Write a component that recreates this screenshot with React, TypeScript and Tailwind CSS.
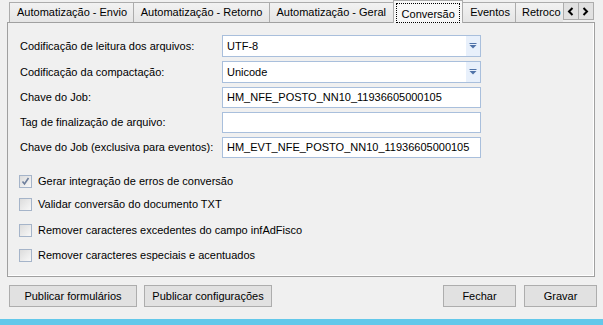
const font = { fontFamily: '"Liberation Sans", Arial, sans-serif' };

function Tab({ label, w }: { label: string; w: number }) {
  return (
    <div
      className="h-[20px] -ml-px border border-b-0 border-[#acacac] bg-gradient-to-b from-[#f2f2f2] to-[#e5e5e5] flex items-center pl-[7px] overflow-hidden whitespace-nowrap"
      style={{ width: w }}
    >
      {label}
    </div>
  );
}

function Combo({ value }: { value: string }) {
  return (
    <div className="w-[259px] h-[22px] border border-[#a9bfdc] bg-white flex">
      <div className="flex-1 flex items-center pl-[4px]">{value}</div>
      <div className="w-[14px] bg-[#e8f0fb] flex items-center justify-center">
        <svg width="8" height="6" viewBox="0 0 8 6">
          <rect x="0.5" y="0" width="7" height="1" fill="#4f72a8" />
          <path d="M0.5 2 L7.5 2 L4 5.5 Z" fill="#4f72a8" />
        </svg>
      </div>
    </div>
  );
}

function TextBox({ value }: { value: string }) {
  return (
    <div className="w-[259px] h-[21px] border border-[#a9bfdc] bg-white flex items-center pl-[4px]">
      {value}
    </div>
  );
}

function Row({ label, children }: { label: string; children: React.ReactNode }) {
  return (
    <div className="flex items-center">
      <div className="w-[202px]">{label}</div>
      {children}
    </div>
  );
}

function Check({ label, checked }: { label: string; checked?: boolean }) {
  return (
    <div className="flex items-center h-[13px]">
      <div className="w-[13px] h-[13px] border border-[#a5b4c9] bg-gradient-to-br from-[#dcdcdc] to-[#f8f8f8] flex items-center justify-center">
        {checked && (
          <svg width="9" height="9" viewBox="0 0 9 9">
            <path d="M1.5 4.5 L3.5 7 L7.5 1" stroke="#6e7f9c" strokeWidth="1.6" fill="none" />
          </svg>
        )}
      </div>
      <span className="ml-[6px]">{label}</span>
    </div>
  );
}

function Button({ label, w }: { label: string; w: number }) {
  return (
    <div
      className="h-[22px] border border-[#adadad] bg-[#e1e1e1] flex items-center justify-center"
      style={{ width: w }}
    >
      {label}
    </div>
  );
}

export default function App() {
  return (
    <div className="w-[603px] h-[325px] bg-[#f0f0f0] text-[11px] text-black flex flex-col overflow-hidden" style={font}>
      {/* tab strip */}
      <div className="h-[22px] flex items-end pl-[10px] pr-[9px] relative z-10">
        <Tab label="Automatização - Envio" w={125} />
        <Tab label="Automatização - Retorno" w={137} />
        <Tab label="Automatização - Geral" w={126} />
        <div className="w-[70px] h-[23px] -mb-px -ml-px border border-b-0 border-[#acacac] bg-[#f7f7f7] p-[2px] pb-0">
          <div className="h-full border border-dotted border-black flex items-start justify-center pt-[2px]">
            Conversão
          </div>
        </div>
        <Tab label="Eventos" w={54} />
        <div className="h-[20px] -ml-px w-[48px] border border-b-0 border-r-0 border-[#acacac] bg-gradient-to-b from-[#f2f2f2] to-[#e5e5e5] flex items-center pl-[6px] overflow-hidden whitespace-nowrap">
          Retroco
        </div>
        <div className="self-start mt-[2px] flex">
          <div className="w-[16px] h-[18px] border border-[#acacac] bg-[#e1e1e1] flex items-center justify-center">
            <svg width="7" height="9" viewBox="0 0 7 9">
              <path d="M5.5 1 L2 4.5 L5.5 8" stroke="#000" strokeWidth="2" fill="none" />
            </svg>
          </div>
          <div className="w-[16px] h-[18px] -ml-px border border-[#acacac] bg-[#e1e1e1] flex items-center justify-center">
            <svg width="7" height="9" viewBox="0 0 7 9">
              <path d="M1.5 1 L5 4.5 L1.5 8" stroke="#000" strokeWidth="2" fill="none" />
            </svg>
          </div>
        </div>
      </div>

      {/* panel */}
      <div className="mx-[7px] w-[588px] h-[255px] border border-[#a0a0a0] shadow-[inset_-1px_-1px_0_#ffffff] pl-[12px] pt-[12px]">
        <div className="flex flex-col gap-[4px]">
          <Row label="Codificação de leitura dos arquivos:">
            <Combo value="UTF-8" />
          </Row>
          <Row label="Codificação da compactação:">
            <Combo value="Unicode" />
          </Row>
          <Row label="Chave do Job:">
            <TextBox value="HM_NFE_POSTO_NN10_11936605000105" />
          </Row>
          <Row label="Tag de finalização de arquivo:">
            <TextBox value="" />
          </Row>
          <Row label="Chave do Job (exclusiva para eventos):">
            <TextBox value="HM_EVT_NFE_POSTO_NN10_11936605000105" />
          </Row>
        </div>
        <div className="flex flex-col mt-[17px] ml-[-1px]">
          <Check label="Gerar integração de erros de conversão" checked />
          <div className="h-[10px]" />
          <Check label="Validar conversão do documento TXT" />
          <div className="h-[13px]" />
          <Check label="Remover caracteres excedentes do campo infAdFisco" />
          <div className="h-[12px]" />
          <Check label="Remover caracteres especiais e acentuados" />
        </div>
      </div>

      {/* buttons */}
      <div className="flex items-center mt-[8px] pl-[9px] pr-[6px]">
        <Button label="Publicar formulários" w={128} />
        <div className="w-[7px]" />
        <Button label="Publicar configurações" w={128} />
        <div className="flex-1" />
        <Button label="Fechar" w={73} />
        <div className="w-[8px]" />
        <Button label="Gravar" w={73} />
      </div>

      <div className="mt-auto h-[6px] bg-[#63c8ea]" />
    </div>
  );
}
